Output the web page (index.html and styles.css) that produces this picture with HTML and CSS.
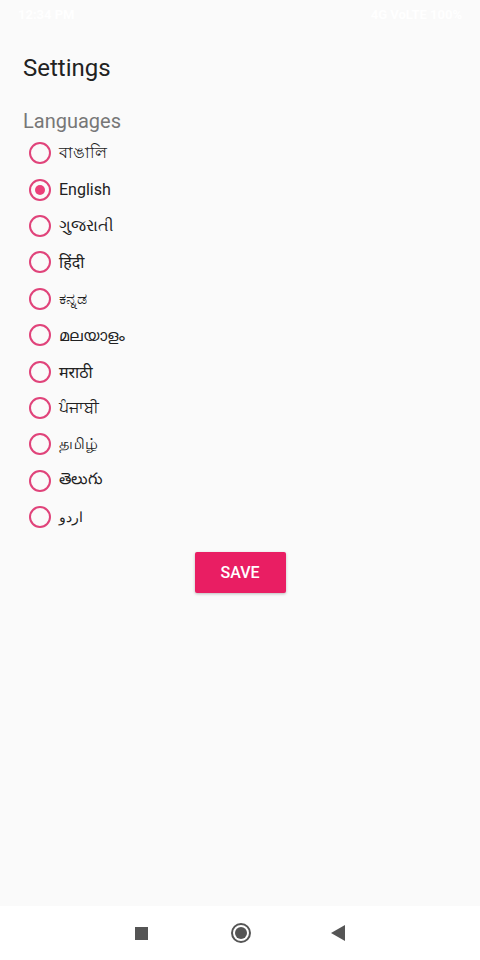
FILE: index.html
```html
<!DOCTYPE html>
<html lang="en">
<head>
    <meta charset="UTF-8">
    <title>Settings</title>
    <meta name="viewport" content="width=device-width, initial-scale=1">
    <link rel="stylesheet" href="styles.css">
</head>
<body>
<div class="screen">
    <div class="statusbar">
        <span>12:34 PM</span>
        <span>4G VoLTE 100%</span>
    </div>
    <div class="content">
        <h1>Settings</h1>
        <div class="section">Languages</div>
        <form class="langs">
            <label class="lang"><input type="radio" name="lang"><span class="dot"></span><span>বাঙালি</span></label>
            <label class="lang"><input type="radio" name="lang" checked><span class="dot"></span><span>English</span></label>
            <label class="lang"><input type="radio" name="lang"><span class="dot"></span><span>ગુજરાતી</span></label>
            <label class="lang"><input type="radio" name="lang"><span class="dot"></span><span>हिंदी</span></label>
            <label class="lang"><input type="radio" name="lang"><span class="dot"></span><span>ಕನ್ನಡ</span></label>
            <label class="lang"><input type="radio" name="lang"><span class="dot"></span><span>മലയാളം</span></label>
            <label class="lang"><input type="radio" name="lang"><span class="dot"></span><span>मराठी</span></label>
            <label class="lang"><input type="radio" name="lang"><span class="dot"></span><span>ਪੰਜਾਬੀ</span></label>
            <label class="lang"><input type="radio" name="lang"><span class="dot"></span><span>தமிழ்</span></label>
            <label class="lang"><input type="radio" name="lang"><span class="dot"></span><span>తెలుగు</span></label>
            <label class="lang"><input type="radio" name="lang"><span class="dot"></span><span class="urdu">اردو</span></label>
        </form>
        <div class="actions">
            <button type="button" class="save">SAVE</button>
        </div>
    </div>
    <div class="navbar">
        <span class="nav-square"></span>
        <span class="nav-home"><span></span></span>
        <svg class="nav-back" width="14" height="16" viewBox="0 0 14 16"><polygon points="14,0 14,16 0,8" fill="#555"/></svg>
    </div>
</div>
</body>
</html>
```

FILE: styles.css
```css
body { margin: 0; background: #fafafa; font-family: Roboto, 'Noto Sans', sans-serif; color: #212121; }
.screen { width: 480px; height: 960px; display: flex; flex-direction: column; }
.statusbar { height: 28px; display: flex; justify-content: space-between; align-items: center; padding: 0 18px; color: #fff; font-size: 13px; font-weight: bold; }
.content { flex: 1; padding: 0 23px; }
h1 { font-size: 24px; font-weight: 400; margin: 25px 0 0; line-height: 30px; color: #222; }
.section { font-size: 20px; color: #777; margin-top: 25px; line-height: 26px; }
.langs { display: flex; flex-direction: column; padding-left: 6px; margin-top: 1px; }
.lang { display: flex; align-items: center; height: 36.4px; font-size: 16px; cursor: pointer; }
.lang input { display: none; }
.urdu { font-size: 14px; }
.dot { width: 18px; height: 18px; border: 2px solid #e0437a; border-radius: 50%; margin-right: 8px; box-sizing: content-box; position: relative; }
.lang input:checked + .dot::after { content: ''; position: absolute; left: 4px; top: 4px; width: 10px; height: 10px; border-radius: 50%; background: #ec3f7a; }
.actions { display: flex; justify-content: center; margin-top: 17px; }
.save { background: #e91e63; color: #fff; border: none; width: 91px; height: 41px; border-radius: 2px; font-family: Roboto, sans-serif; font-size: 16px; font-weight: 500; box-shadow: 0 1px 3px rgba(0,0,0,0.25); cursor: pointer; }
.navbar { height: 54px; background: #fff; display: flex; align-items: center; justify-content: center; }
.nav-square { width: 13px; height: 13px; background: #555; margin-right: 83px; }
.nav-home { width: 16px; height: 16px; border: 2px solid #555; border-radius: 50%; display: flex; align-items: center; justify-content: center; }
.nav-home span { width: 12px; height: 12px; border-radius: 50%; background: #555; }
.nav-back { margin-left: 80px; }
```
